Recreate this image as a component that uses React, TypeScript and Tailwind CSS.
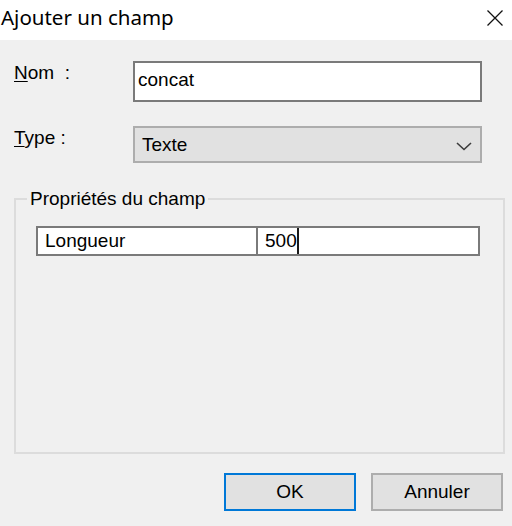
import React from "react";

const Chevron = () => (
  <svg width="16" height="9" viewBox="0 0 16 9" className="mt-[8px] mr-[8px]">
    <polyline
      points="1,1 8,7.5 15,1"
      fill="none"
      stroke="#3c3c3c"
      strokeWidth="1.6"
    />
  </svg>
);

const App = () => {
  return (
    <div className="w-[512px] h-[526px] bg-[#f0f0f0] overflow-hidden flex flex-col text-black font-['Liberation_Sans',Arial,sans-serif] text-[19px] leading-[22px]">
      {/* title bar */}
      <div className="h-[40px] bg-white flex items-start justify-between pl-[1px] pr-[9px] pt-[3px]">
        <span className="font-['Noto_Sans',sans-serif] text-[20.5px] leading-[28px]">
          Ajouter un champ
        </span>
        <svg width="16" height="16" viewBox="0 0 16 16" className="mt-[7px]">
          <path
            d="M0.5 0.5 L15.5 15.5 M15.5 0.5 L0.5 15.5"
            stroke="#111"
            strokeWidth="1.3"
          />
        </svg>
      </div>

      <div className="flex flex-col pl-[14px]">
        <div className="flex mt-[21px]">
          <div className="w-[119px] pt-[1px] whitespace-pre">
            <span className="underline underline-offset-2">N</span>om  :
          </div>
          <div className="w-[349px] h-[41px] border-2 border-[#7a7a7a] bg-white pl-[3px] pt-[6px]">
            concat
          </div>
        </div>

        <div className="flex mt-[24px]">
          <div className="w-[119px] pt-[1px] whitespace-pre">
            <span className="underline underline-offset-2">T</span>ype :
          </div>
          <div className="w-[349px] h-[37px] border-2 border-[#adadad] bg-[#e1e1e1] pl-[7px] pt-[6px] flex items-start justify-between">
            <span>Texte</span>
            <Chevron />
          </div>
        </div>

        <fieldset className="mt-[25px] w-[491px] h-[266px] border-2 border-[#dcdcdc] pl-[11px]">
          <legend className="px-[3px]">Propriétés du champ</legend>
          <div className="mt-[16px] ml-[9px] w-[444px] h-[30px] border-2 border-[#7a7a7a] bg-white flex">
            <div className="w-[220px] border-r-2 border-[#7a7a7a] pl-[7px] flex items-center">
              Longueur
            </div>
            <div className="flex-1 pl-[7px] flex items-center">
              <span>500</span>
              <span className="w-[2px] h-[26px] bg-[#1a1a1a]" />
            </div>
          </div>
        </fieldset>

        <div className="flex justify-end gap-[15px] pr-[9px] mt-[19px]">
          <button className="w-[132px] h-[38px] border-2 border-[#0078d7] bg-[#e1e1e1] flex items-center justify-center">
            OK
          </button>
          <button className="w-[132px] h-[38px] border-2 border-[#adadad] bg-[#e1e1e1] flex items-center justify-center">
            Annuler
          </button>
        </div>
      </div>
    </div>
  );
};

export default App;
